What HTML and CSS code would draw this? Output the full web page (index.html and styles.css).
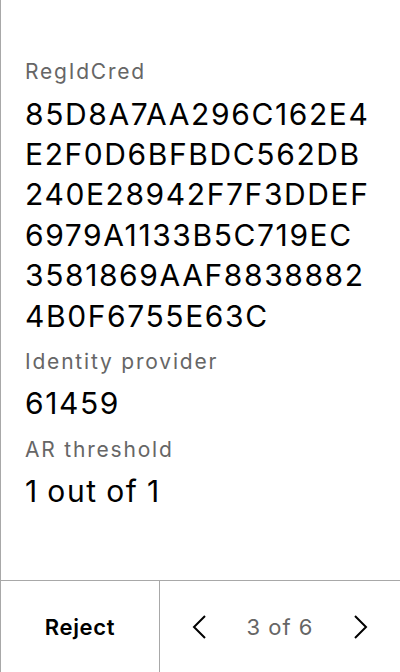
FILE: index.html
```html
<!DOCTYPE html>
<html lang="en">
<head>
<meta charset="utf-8">
<title>Credential</title>
<link rel="stylesheet" href="styles.css">
</head>
<body>
<div class="screen">
  <main class="details">
    <div class="field">
      <div class="label">RegIdCred</div>
      <div class="value hex">85D8A7AA296C162E4<br>E2F0D6BFBDC562DB<br>240E28942F7F3DDEF<br>6979A1133B5C719EC<br>3581869AAF8838882<br>4B0F6755E63C</div>
    </div>
    <div class="field">
      <div class="label">Identity provider</div>
      <div class="value">61459</div>
    </div>
    <div class="field">
      <div class="label">AR threshold</div>
      <div class="value">1 out of 1</div>
    </div>
  </main>
  <footer class="actions">
    <button class="reject">Reject</button>
    <div class="pager">
      <button class="nav" aria-label="Previous">
        <svg width="16" height="24" viewBox="0 0 16 24"><polyline points="14,1 3,12 14,23" fill="none" stroke="#000" stroke-width="2"/></svg>
      </button>
      <span class="count">3 of 6</span>
      <button class="nav" aria-label="Next">
        <svg width="16" height="24" viewBox="0 0 16 24"><polyline points="2,1 13,12 2,23" fill="none" stroke="#000" stroke-width="2"/></svg>
      </button>
    </div>
  </footer>
</div>
</body>
</html>
```
FILE: styles.css
```css
html, body {
  margin: 0;
  padding: 0;
  background: #fff;
}
body {
  font-family: Inter, "Noto Sans", sans-serif;
  color: #000;
}
.screen {
  height: 672px;
  display: flex;
  flex-direction: column;
  border-left: 1px solid #a8a8a8;
  box-sizing: border-box;
}
.details {
  flex: 1;
  padding: 58px 20px 0 24px;
}
.field {
  margin-bottom: 12px;
}
.label {
  font-size: 21px;
  line-height: 28px;
  letter-spacing: 1.8px;
  color: #666;
  margin-bottom: 7.5px;
}
.value {
  font-size: 30px;
  line-height: 40.4px;
  letter-spacing: 1.6px;
  word-spacing: -1.5px;
  color: #000;
}
.hex {
  white-space: nowrap;
}
.actions {
  height: 92px;
  box-sizing: border-box;
  border-top: 1px solid #a8a8a8;
  display: flex;
}
button {
  font-family: inherit;
  background: none;
  border: none;
  padding: 0;
  cursor: pointer;
}
.reject {
  width: 159px;
  border-right: 1px solid #a8a8a8;
  font-size: 22px;
  font-weight: 600;
  letter-spacing: 0.7px;
  color: #000;
}
.pager {
  flex: 1;
  display: flex;
  align-items: center;
  justify-content: space-between;
  padding: 0 31px 0 31px;
}
.nav {
  display: flex;
  align-items: center;
}
.count {
  font-size: 22px;
  letter-spacing: 1px;
  color: #666;
}
```
